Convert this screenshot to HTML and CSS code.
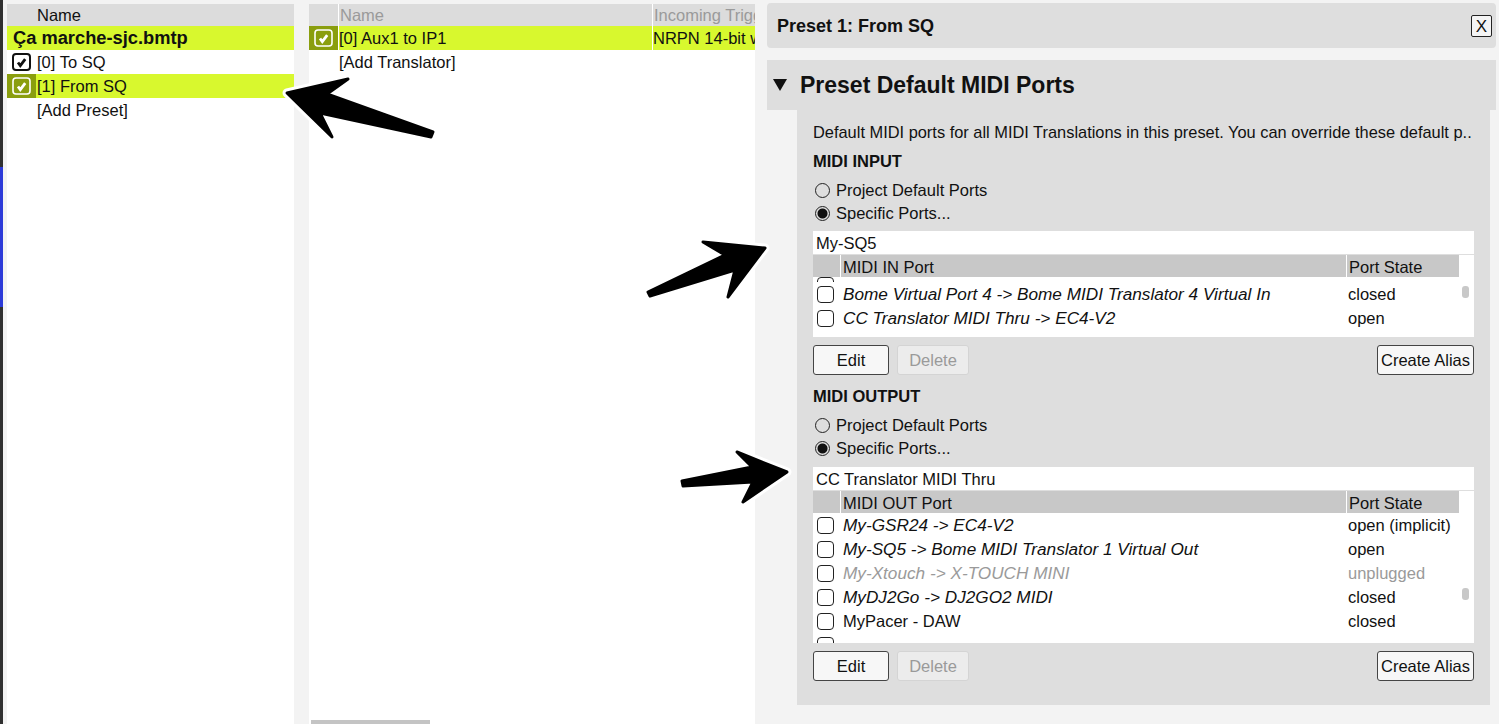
FILE: index.html
```html
<!DOCTYPE html>
<html>
<head>
    <title>Preset 1: From SQ</title>
    <link rel="stylesheet" href="styles.css">
</head>
<body>
    <div class="app">
        <div class="edge"></div>

        <div class="list presets">
            <div class="lhead"><span></span><span>Name</span></div>
            <div class="lrow project">Ça marche-sjc.bmtp</div>
            <div class="lrow">
                <span class="cb"><svg class="chk" viewBox="0 0 19 18" width="19" height="18"><rect x="1" y="1" width="17" height="16" rx="3" fill="none" stroke="currentColor" stroke-width="2"/><path d="M6 9.5 L8.3 12.6 L13.2 6.2" fill="none" stroke="currentColor" stroke-width="2.8"/></svg></span>
                <span class="txt">[0] To SQ</span>
            </div>
            <div class="lrow sel">
                <span class="cb"><svg class="chk" viewBox="0 0 19 18" width="19" height="18"><rect x="1" y="1" width="17" height="16" rx="3" fill="none" stroke="currentColor" stroke-width="1.6"/><path d="M6 9.5 L8.3 12.6 L13.2 6.2" fill="none" stroke="currentColor" stroke-width="2.8"/></svg></span>
                <span class="txt">[1] From SQ</span>
            </div>
            <div class="lrow">
                <span class="cb"></span>
                <span class="txt">[Add Preset]</span>
            </div>
        </div>

        <div class="list translators">
            <div class="lhead"><span></span><span>Name</span><span>Incoming Trigger</span></div>
            <div class="lrow sel">
                <span class="cb"><svg class="chk" viewBox="0 0 19 18" width="19" height="18"><rect x="1" y="1" width="17" height="16" rx="3" fill="none" stroke="currentColor" stroke-width="1.6"/><path d="M6 9.5 L8.3 12.6 L13.2 6.2" fill="none" stroke="currentColor" stroke-width="2.8"/></svg></span>
                <span class="txt">[0] Aux1 to IP1</span>
                <span class="txt">NRPN 14-bit with value</span>
            </div>
            <div class="lrow">
                <span class="cb"></span>
                <span class="txt">[Add Translator]</span>
            </div>
            <div class="hscroll"></div>
        </div>

        <div class="editor">
            <div class="ptitle">
                <span>Preset 1: From SQ</span>
                <span class="close">X</span>
            </div>

            <div class="section-head"><span class="tri"></span>Preset Default MIDI Ports</div>
            <div class="sbody">
                <div class="desc">Default MIDI ports for all MIDI Translations in this preset. You can override these default p..</div>

                <h3>MIDI INPUT</h3>
                <div class="radio"><i></i>Project Default Ports</div>
                <div class="radio"><i class="on"></i>Specific Ports...</div>
                <div class="field">My-SQ5</div>
                <div class="thead"><span></span><span>MIDI IN Port</span><span>Port State</span><span></span></div>
                <div class="plist in">
                    <div class="rows">
                        <div class="prow peek"><span class="box"></span><span></span><span></span></div>
                        <div class="prow"><span class="box"></span><span class="pname it">Bome Virtual Port 4 -&gt; Bome MIDI Translator 4 Virtual In</span><span class="pstate">closed</span></div>
                        <div class="prow"><span class="box"></span><span class="pname it">CC Translator MIDI Thru -&gt; EC4-V2</span><span class="pstate">open</span></div>
                    </div>
                    <div class="track"><div class="thumb" style="margin-top: 9px;"></div></div>
                </div>
                <div class="btns">
                    <button class="btn edit">Edit</button>
                    <button class="btn del">Delete</button>
                    <button class="btn alias">Create Alias</button>
                </div>

                <h3 class="out">MIDI OUTPUT</h3>
                <div class="radio"><i></i>Project Default Ports</div>
                <div class="radio"><i class="on"></i>Specific Ports...</div>
                <div class="field out">CC Translator MIDI Thru</div>
                <div class="thead"><span></span><span>MIDI OUT Port</span><span>Port State</span><span></span></div>
                <div class="plist out">
                    <div class="rows">
                        <div class="prow"><span class="box"></span><span class="pname it">My-GSR24 -&gt; EC4-V2</span><span class="pstate">open (implicit)</span></div>
                        <div class="prow"><span class="box"></span><span class="pname it">My-SQ5 -&gt; Bome MIDI Translator 1 Virtual Out</span><span class="pstate">open</span></div>
                        <div class="prow off"><span class="box"></span><span class="pname it">My-Xtouch -&gt; X-TOUCH MINI</span><span class="pstate">unplugged</span></div>
                        <div class="prow"><span class="box"></span><span class="pname it">MyDJ2Go -&gt; DJ2GO2 MIDI</span><span class="pstate">closed</span></div>
                        <div class="prow"><span class="box"></span><span class="pname">MyPacer - DAW</span><span class="pstate">closed</span></div>
                        <div class="prow"><span class="box"></span><span></span><span></span></div>
                    </div>
                    <div class="track"><div class="thumb" style="margin-top: 75px;"></div></div>
                </div>
                <div class="btns">
                    <button class="btn edit">Edit</button>
                    <button class="btn del">Delete</button>
                    <button class="btn alias">Create Alias</button>
                </div>
            </div>
        </div>
    </div>

    <!-- annotation arrows drawn over the screenshot -->
    <svg class="arrows" width="1499" height="724" viewBox="0 0 1499 724">
        <g class="halo">
            <polygon points="287,93 348,79 327,94 433,132 431,137 320,113 332,137"/>
            <polygon points="765,248 703,242 725,255 648,292 650,296 735,270 728,297"/>
            <polygon points="787,472 737,452 752,467 682,481 683,486 753,482 743,502"/>
        </g>
        <g class="ink">
            <polygon points="287,93 348,79 327,94 433,132 431,137 320,113 332,137"/>
            <polygon points="765,248 703,242 725,255 648,292 650,296 735,270 728,297"/>
            <polygon points="787,472 737,452 752,467 682,481 683,486 753,482 743,502"/>
        </g>
    </svg>
</body>
</html>
```

FILE: styles.css
```css
body {
    margin: 0;
    background-color: #f3f3f3;
    font-family: "Liberation Sans", Arial, sans-serif;
    font-size: 16.5px;
    color: #111;
    overflow: hidden;
    position: relative;
}
.app {
    display: flex;
    height: 724px;
}
.edge {
    width: 3px;
    margin-right: 4px;
    background: linear-gradient(#303030 0 167px, #2c3ad8 167px 307px, #303030 307px);
}

/* left lists */
.list {
    margin-top: 4px;
    background: white;
    display: flex;
    flex-direction: column;
}
.presets {
    width: 287px;
    margin-right: 15px;
}
.translators {
    width: 446px;
}
.lhead, .lrow {
    display: grid;
    grid-template-columns: 29px 1fr;
}
.translators .lhead, .translators .lrow {
    grid-template-columns: 29px 313px 1fr;
    column-gap: 1px;
}
.lhead {
    height: 22px;
    line-height: 23px;
    overflow: hidden;
}
.lhead span {
    background: #dcdcdc;
    padding-left: 1px;
    white-space: nowrap;
    overflow: hidden;
}
.translators .lhead span {
    color: #9a9a9a;
}
.lrow {
    height: 24px;
    line-height: 25px;
    white-space: nowrap;
    overflow: hidden;
}
.lrow .cb {
    display: flex;
    align-items: center;
    justify-content: center;
}
.lrow .txt {
    padding-left: 1px;
    overflow: hidden;
}
.translators .lrow .txt {
    padding-left: 0;
}
.lrow.project {
    display: block;
    height: 24px;
    line-height: 23px;
    background: #d8f82e;
    font-weight: bold;
    font-size: 18.3px;
    padding-left: 6px;
}
.lrow.sel .cb {
    background: #8a9e0e;
    color: white;
}
.lrow.sel .txt {
    background: #d8f82e;
}
.chk {
    display: block;
}
.hscroll {
    margin-top: auto;
    margin-left: 2px;
    width: 119px;
    height: 4px;
    background: #c4c4c4;
}

/* editor */
.editor {
    flex: 1;
    padding: 3px 3px 0 12px;
}
.ptitle {
    height: 45px;
    background: #dedede;
    border-radius: 4px;
    display: flex;
    align-items: center;
    justify-content: space-between;
    padding: 0 4px 0 10px;
    font-weight: bold;
    font-size: 18px;
}
.ptitle span:first-child {
    padding-top: 2px;
}
.close {
    width: 19px;
    height: 20px;
    border: 1px solid #222;
    border-radius: 2px;
    background: #f4f4f4;
    font-size: 17px;
    font-weight: normal;
    text-align: center;
    line-height: 22px;
}
.section-head {
    margin-top: 12px;
    height: 50px;
    background: #dedede;
    display: flex;
    align-items: center;
    font-size: 23px;
    font-weight: bold;
}
.tri {
    width: 0;
    height: 0;
    border-left: 7px solid transparent;
    border-right: 7px solid transparent;
    border-top: 12px solid #111;
    margin: 0 13px 0 6px;
}
.sbody {
    margin: 0 6px 0 30px;
    background: #dedede;
    padding: 12px 16px 24px;
}
.desc {
    height: 20px;
    line-height: 21px;
    font-size: 16.4px;
    white-space: nowrap;
    overflow: hidden;
}
.sbody h3 {
    margin: 9px 0 8px;
    height: 20px;
    font-size: 16.5px;
    line-height: 21px;
}
.sbody h3.out {
    margin-top: 11px;
}
.radio {
    height: 23px;
    display: flex;
    align-items: center;
}
.radio i {
    width: 13px;
    height: 13px;
    border: 1.5px solid #222;
    border-radius: 50%;
    margin: 0 6px 0 2px;
}
.radio i.on {
    background: radial-gradient(circle, #111 0 4.5px, transparent 5.5px);
}
.field {
    margin-top: 6px;
    height: 23px;
    line-height: 25px;
    overflow: hidden;
    background: white;
    padding-left: 3px;
}
.field.out {
    margin-top: 7px;
}
.thead {
    margin-top: 1px;
    display: grid;
    grid-template-columns: 27px 1fr 112px 14px;
    column-gap: 1px;
    background: white;
    height: 22px;
    line-height: 25px;
    overflow: hidden;
}
.thead span {
    background: #c8c8c8;
    padding-left: 2px;
}
.thead span:last-child {
    background: white;
}
.plist {
    display: flex;
    background: white;
    overflow: hidden;
}
.plist.in {
    height: 60px;
}
.plist.out {
    height: 130px;
}
.rows {
    flex: 1;
}
.prow {
    display: grid;
    grid-template-columns: 27px 1fr 112px;
    column-gap: 1px;
    height: 24px;
    line-height: 25px;
    align-items: center;
    white-space: nowrap;
}
.prow.peek {
    height: 5px;
    overflow: hidden;
    align-items: end;
}
.box {
    width: 15px;
    height: 15px;
    border: 1.5px solid #222;
    border-radius: 4px;
    margin-left: 4px;
    background: white;
}
.peek .box {
    margin-bottom: 1px;
}
.pname {
    padding-left: 2px;
    overflow: hidden;
}
.pname.it {
    font-style: italic;
    font-size: 17.2px;
}
.pstate {
    padding-left: 2px;
}
.prow.off .pname, .prow.off .pstate {
    color: #9a9a9a;
}
.track {
    width: 15px;
    margin-left: 1px;
}
.thumb {
    width: 7px;
    height: 12px;
    margin-left: 3px;
    border-radius: 3px;
    background: #c8c8c8;
}
.btns {
    margin-top: 8px;
    display: flex;
    gap: 8px;
}
.btn {
    box-sizing: border-box;
    height: 30px;
    padding: 1px 0 0;
    border: 1px solid #444;
    border-radius: 3px;
    background: #f7f7f7;
    font-family: inherit;
    font-size: 16.5px;
    color: #111;
}
.btn.edit {
    width: 76px;
}
.btn.del {
    width: 72px;
    color: #9a9a9a;
    border-color: #d4d4d4;
    background: #ececec;
}
.btn.alias {
    margin-left: auto;
    width: 97px;
}

/* arrows */
.arrows {
    position: absolute;
    top: 0;
    left: 0;
    pointer-events: none;
}
.halo polygon {
    fill: white;
    stroke: white;
    stroke-width: 9;
    stroke-linejoin: round;
}
.ink polygon {
    fill: black;
    stroke: black;
    stroke-width: 3;
    stroke-linejoin: round;
}
```
